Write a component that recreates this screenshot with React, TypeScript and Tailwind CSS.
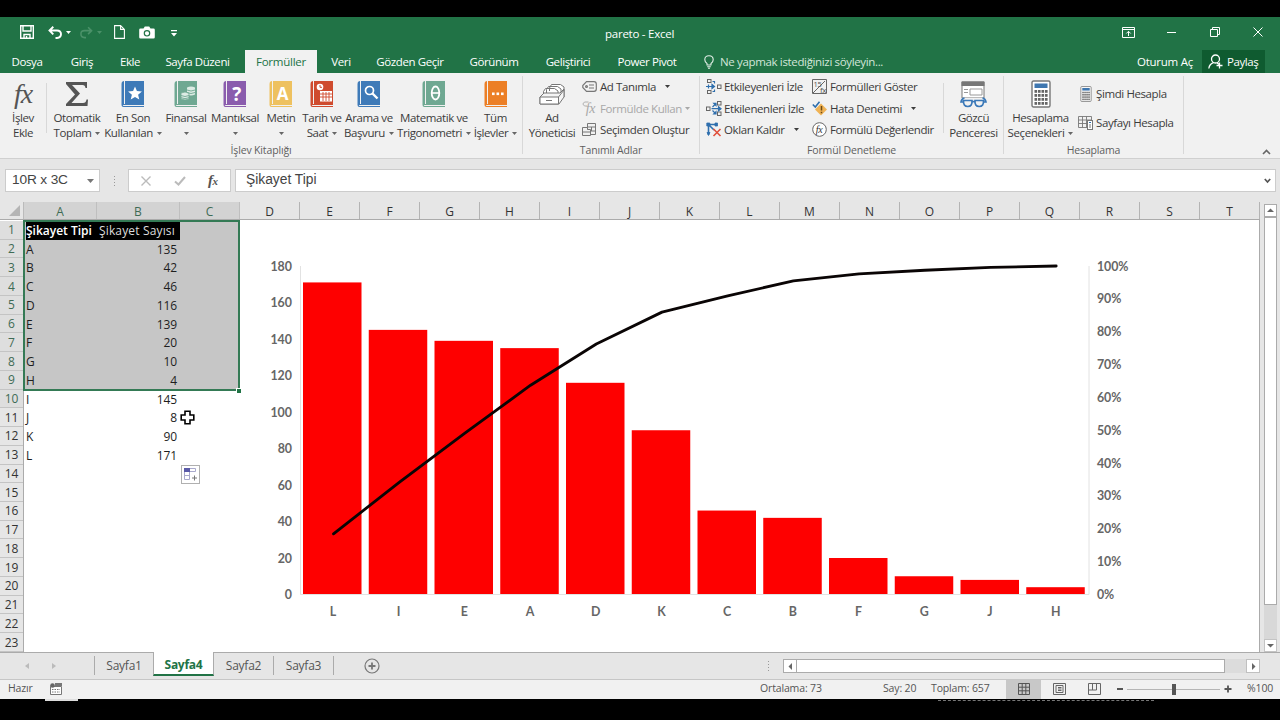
import React from "react";

type Kids = { children?: React.ReactNode };

const Caret = ({ className = "" }: { className?: string }) => (
  <svg width="5" height="3" viewBox="0 0 5 3" className={`shrink-0 ${className}`}>
    <path d="M0 0h5L2.5 3z" fill="currentColor" />
  </svg>
);

const Sep = ({ className = "" }: { className?: string }) => (
  <div className={`w-px shrink-0 self-start bg-[#d8d8d8] ${className}`} />
);

const Book = ({ color, children }: { color: string } & Kids) => (
  <svg width="24" height="28" viewBox="0 0 24 28">
    <path d="M1.5 1.5Q.5 2 .5 4v21Q.5 27 2.5 27H23v-1H3Q1.8 26 1.8 25H23V1H4v23H3V1z" fill={color} />
    {children}
  </svg>
);

const BigButton = ({ width, icon, lines, caret }: { width: string; icon: React.ReactNode; lines: string[]; caret?: boolean }) => (
  <div className={`flex shrink-0 flex-col items-center pt-[6px] ${width}`}>
    <div className="flex h-[30px] items-center justify-center">{icon}</div>
    <div className="flex h-[15px] items-center whitespace-nowrap pt-[3px]">{lines[0]}</div>
    <div className="flex h-[15px] items-center gap-[4px] whitespace-nowrap pt-[3px]">
      {lines[1] && <span>{lines[1]}</span>}
      {caret && <Caret className="text-[#666]" />}
    </div>
  </div>
);

const Small = ({ icon, label, caret, muted }: { icon: React.ReactNode; label: string; caret?: string; muted?: boolean }) => (
  <div className={`flex h-[21.5px] items-center whitespace-nowrap ${muted ? "text-[#a8a8a8]" : ""}`}>
    <span className="flex w-[18px] shrink-0 items-center">{icon}</span>
    <span>{label}</span>
    {caret && <Caret className={caret} />}
  </div>
);

const Group = ({ width, label, children }: { width: string; label: string } & Kids) => (
  <div className={`flex h-[86px] shrink-0 flex-col ${width}`}>
    <div className="flex h-[71px]">{children}</div>
    <div className="flex h-[13px] items-center justify-center whitespace-nowrap text-[10.5px] tracking-[-0.15px] text-[#5f5f5f]">{label}</div>
  </div>
);

const CalcIcon = ({ w, h }: { w: number; h: number }) => (
  <svg width={w} height={h} viewBox="0 0 20 28">
    <rect x="1" y="1" width="18" height="26" rx="1.5" fill="#fff" stroke="#777" strokeWidth="1.4" />
    <rect x="3.5" y="3.5" width="13" height="4.5" fill="#3f77b0" />
    {[10, 14, 18, 22].map((y) => [3.5, 7, 10.5, 14].map((x) => <rect key={`${x}-${y}`} x={x} y={y} width="2.6" height="2.8" fill="#666" />))}
  </svg>
);

const Trace = ({ kind }: { kind: "in" | "out" | "clear" }) => (
  <svg width="16" height="15" viewBox="0 0 16 15" fill="none">
    {kind === "in" && (
      <g>
        <g stroke="#666"><rect x="1.5" y=".5" width="3.500" height="3" /><rect x="1.5" y="11.5" width="3.500" height="3" /><rect x="11.5" y="6" width="3.500" height="3.500" /></g>
        <g stroke="#2f6fad" strokeWidth="1.2"><path d="M0 7.500h6M6.500 2.500h2v2M6.500 12.500h2v-2" /><path d="M6 5.500l2.500 2L6 9.500z" fill="#2f6fad" /><path d="M2.500 5.500v4" /></g>
      </g>
    )}
    {kind === "out" && (
      <g>
        <g stroke="#666"><rect x=".5" y="6" width="3.500" height="3.500" /><rect x="11.500" y=".5" width="3.500" height="3.500" /><rect x="11.500" y="11" width="3.500" height="3.500" /></g>
        <g stroke="#2f6fad" strokeWidth="1.2"><path d="M5.500 7.700H14M6.500 6l2.500-2.500M6.500 9.500L9 12" /><path d="M12.500 5.700l2.500 2-2.500 2zM7.800 2.300H10v2.200zM7.800 13H10v-2.200z" fill="#2f6fad" /></g>
      </g>
    )}
    {kind === "clear" && (
      <g>
        <g stroke="#2f6fad" strokeWidth="1.6"><path d="M2.5 2v11M2 2.500h8M3 3l5 5" /><path d="M.8 1h3v3h-3zM9 1h2.500v3H9zM1 10.500h3L2.500 13.500z" fill="#2f6fad" strokeWidth=".8" /></g>
        <path d="M7.500 7l7 7M14.500 7l-7 7" stroke="#e0503c" strokeWidth="1.6" />
      </g>
    )}
  </svg>
);

const serif = "italic font-['Liberation_Serif',serif]";

const TitleBar = () => (
  <div className="relative flex h-[32px] items-center pb-[2px] text-white">
    <svg width="14" height="14" viewBox="0 0 14 14" className="ml-[20px]" fill="none" stroke="#fff" strokeWidth="1.4">
      <path d="M.7.7h12.6v12.6H.7zM3 1v5h8V1M4 13V9.5h6V13M6.5 11v2" />
    </svg>
    <svg width="14" height="13" viewBox="0 0 14 13" className="ml-[14px]" fill="none" stroke="#fff" strokeWidth="1.9">
      <path d="M1.5 4.5H9q4 0 4 3.6T9 12H7.5M5.3.8L1.5 4.5l3.8 3.800" />
    </svg>
    <Caret className="ml-[4px]" />
    <svg width="13" height="13" viewBox="0 0 14 13" className="ml-[9px]" fill="none" stroke="#4b9169" strokeWidth="1.7">
      <path d="M12.500 4.500H5q-4 0-4 3.600T5 12h1.500M8.700.8l3.800 3.700-3.800 3.800" />
    </svg>
    <Caret className="ml-[4px] text-[#4b9169]" />
    <svg width="11" height="14" viewBox="0 0 11 14" className="ml-[12px]" fill="none" stroke="#fff" strokeWidth="1.1">
      <path d="M.6.600h6l3.800 3.800v9H.6zM6.600.600v3.800h3.800" />
    </svg>
    <svg width="16" height="13" viewBox="0 0 16 13" className="ml-[14px]">
      <path d="M1.500 2.500H4.500L5.800.500h4.400l1.300 2h3q1.300 0 1.300 1.300v7.400q0 1.300-1.300 1.300h-13Q.2 12.500.2 11.200V3.800Q.2 2.500 1.500 2.500z" fill="#fff" />
      <circle cx="8" cy="7.300" r="2.700" fill="none" stroke="#217346" strokeWidth="1.200" />
    </svg>
    <svg width="6" height="7" viewBox="0 0 6 7" className="ml-[16px] mt-[3px]">
      <path d="M0 0h6v1.300H0zM0 3h6L3 6.500z" fill="#fff" />
    </svg>
    <div className="absolute left-[605px] top-[8px] text-[11.5px] leading-[18px] tracking-[-0.25px]">pareto - Excel</div>
    <div className="ml-auto flex items-center pr-[17px]">
      <svg width="13" height="11" viewBox="0 0 13 11" fill="none" stroke="#fff">
        <path d="M.5.500h12v10H.5zM.5 2.500h12M6.500 9V4.500M4.300 6.500l2.200-2.200 2.200 2.200" />
      </svg>
      <div className="ml-[32px] h-px w-[9px] bg-white" />
      <svg width="10" height="10" viewBox="0 0 10 10" className="ml-[34px]" fill="none" stroke="#fff"><path d="M.5 2.500h7v7h-7zM2.500 2.500v-2h7v7h-2" /></svg>
      <svg width="10" height="10" viewBox="0 0 10 10" className="ml-[33px]" fill="none" stroke="#fff"><path d="M.5.500l9 9M9.500.500l-9 9" /></svg>
    </div>
  </div>
);

const tabs: [string, string][] = [
  ["Dosya", "w-[54px]"], ["Giriş", "w-[56px]"], ["Ekle", "w-[40px]"], ["Sayfa Düzeni", "w-[95px]"], ["Formüller", "w-[72px]"],
  ["Veri", "w-[48px]"], ["Gözden Geçir", "w-[90px]"], ["Görünüm", "w-[78px]"], ["Geliştirici", "w-[70px]"], ["Power Pivot", "w-[88px]"],
];

const TabBar = () => (
  <div className="flex h-[24px] items-end text-[11.5px] tracking-[-0.4px] text-white">
    {tabs.map(([t, w]) => (
      <div key={t} className={`flex h-[23px] shrink-0 items-center justify-center whitespace-nowrap ${w} ${t === "Formüller" ? "bg-[#f1f1f1] tracking-[-0.25px] text-[#217346]" : ""}`}>{t}</div>
    ))}
    <div className="ml-[13px] flex h-[23px] items-center gap-[6px] text-[#d3e6da]">
      <svg width="10" height="14" viewBox="0 0 10 14" fill="none" stroke="#e5f0e9" strokeWidth="1.1"><path d="M3 10V8.500Q.8 7 .8 4.700.800.700 5 .700t4.200 4Q9.200 7 7 8.500V10zM3.200 11.700h3.600M4 13.200h2" /></svg>
      <span className="whitespace-nowrap tracking-[-0.35px]">Ne yapmak istediğinizi söyleyin...</span>
    </div>
    <div className="ml-auto flex h-[23px] items-center whitespace-nowrap pr-[9px] tracking-[-0.25px]">Oturum Aç</div>
    <div className="mr-[15px] flex h-[23px] w-[63px] items-center gap-[4px] bg-[#0f5b30] pl-[6px]">
      <svg width="15" height="15" viewBox="0 0 15 15" fill="none" stroke="#fff" strokeWidth="1.300"><circle cx="7.500" cy="5" r="4" /><path d="M.8 14.500Q1.500 9.800 5.500 8.600M9 9l2 1.300M8.500 11.500h6M11.500 8.500v6" /></svg>
      <span>Paylaş</span>
    </div>
  </div>
);

const Ribbon = () => (
  <div className="flex h-[86px] border-b border-[#d0d0d0] bg-[#f1f1f1] text-[11.5px] leading-none tracking-[-0.4px] text-[#3c3c3c]">
    <Group width="w-[522px]" label="İşlev Kitaplığı">
      <BigButton width="w-[46px]" lines={["İşlev", "Ekle"]} icon={<span className={`${serif} text-[28px] leading-none tracking-[-1px] text-[#555]`}>fx</span>} />
      <Sep className="mt-[10px] h-[50px]" />
      <BigButton width="w-[60px]" caret lines={["Otomatik", "Toplam"]} icon={<svg width="24" height="26" viewBox="0 0 24 26"><path d="M1 1h21v6h-1.500q-.3-3-3-3H7l8 8.500L6.500 22H18q3 0 3.500-3.500H23L22.500 25H1v-2l9-9.500L1 3z" fill="#555" /></svg>} />
      <BigButton width="w-[52px]" caret lines={["En Son", "Kullanılan"]} icon={<Book color="#3e7ab8"><path d="M14 6.500l1.900 4.600 5 .4-3.800 3.200 1.200 4.800-4.300-2.600-4.300 2.600 1.200-4.800L7.100 11.500l5-.4z" fill="#fff" /></Book>} />
      <BigButton width="w-[54px]" caret lines={["Finansal"]} icon={<Book color="#6fa892"><g fill="#dcebe4"><path d="M13 7.500q4-2 8 0v7q-4 2-8 0z" /><path d="M7 13q4-2 8 0v6q-4 2-8 0z" stroke="#6fa892" strokeWidth=".8" /></g><path d="M13 10q4 2 8 0M13 12.500q4 2 8 0M7 15.500q4 2 8 0M7 17.700q4 2 8 0" stroke="#6fa892" fill="none" strokeWidth=".9" /></Book>} />
      <BigButton width="w-[44px]" caret lines={["Mantıksal"]} icon={<Book color="#8a5cad"><text x="13.500" y="20.500" textAnchor="middle" fontSize="19" fontWeight="700" fill="#fff">?</text></Book>} />
      <BigButton width="w-[48px]" caret lines={["Metin"]} icon={<Book color="#eec15f"><text x="13.500" y="19.500" textAnchor="middle" fontSize="17" fontWeight="700" fill="#fff">A</text></Book>} />
      <BigButton width="w-[34px]" caret lines={["Tarih ve", "Saat"]} icon={<Book color="#cf4b2e"><rect x="10" y="11" width="12" height="10.500" fill="#fff" /><path d="M10 14h12M10 17h12M13 12v9M16 12v9M19 12v9" stroke="#cf4b2e" strokeWidth=".9" /><circle cx="10" cy="7" r="3.300" fill="#fff" /><path d="M10 5v2.300h2" stroke="#cf4b2e" fill="none" /></Book>} />
      <BigButton width="w-[60px]" caret lines={["Arama ve", "Başvuru"]} icon={<Book color="#3e7ab8"><circle cx="12.500" cy="10.500" r="4" fill="none" stroke="#fff" strokeWidth="1.700" /><path d="M15.500 13.500l5 5" stroke="#fff" strokeWidth="2.400" /></Book>} />
      <BigButton width="w-[70px]" caret lines={["Matematik ve", "Trigonometri"]} icon={<Book color="#6fa892"><ellipse cx="13.500" cy="13" rx="3.800" ry="6.500" fill="none" stroke="#fff" strokeWidth="1.800" /><path d="M10 13h7" stroke="#fff" strokeWidth="1.600" /></Book>} />
      <BigButton width="w-[53px]" caret lines={["Tüm", "İşlevler"]} icon={<Book color="#ec7f26"><g fill="#fff"><rect x="8" y="12.500" width="2.600" height="2.600" /><rect x="12.500" y="12.500" width="2.600" height="2.600" /><rect x="17" y="12.500" width="2.600" height="2.600" /></g></Book>} />
    </Group>
    <Sep className="mt-[3px] h-[78px]" />
    <Group width="w-[176px]" label="Tanımlı Adlar">
      <BigButton width="w-[58px]" lines={["Ad", "Yöneticisi"]} icon={<svg width="26" height="22" viewBox="0 0 26 22" fill="#fff" stroke="#777"><path d="M10.500 8V5l2-3.500h9L25 4v10M7.500 10V6.500L9.500 3.500h9L22 6v5M4.500 12V8.500l2-3h9L19 8v5" /><path d="M1 14l4-4h16l4-4v8l-5 7H1z" fill="#f5f5f5" /><path d="M1 14h18.500v7H1z" /><path d="M19.500 14L25 7M7 17.500h6" fill="none" /></svg>} />
      <div className="flex flex-col pl-[1px] pt-[3px]">
        <Small label="Ad Tanımla" caret="ml-[9px]" icon={<svg width="15" height="11" viewBox="0 0 15 11" fill="none" stroke="#777" strokeWidth="1.200"><path d="M4.500.700H12q2.300 0 2.300 2.300v5q0 2.300-2.300 2.300H4.500L.8 6.500v-2z" /><circle cx="4.500" cy="5.500" r=".9" /><path d="M7 4h5M7 7h5" /></svg>} />
        <Small muted label="Formülde Kullan" caret="ml-[3px]" icon={<svg width="15" height="15" viewBox="0 0 15 15"><path d="M6.500 1H2.500L.8 3l1.700 2H5" fill="none" stroke="#b0b0b0" /><text x="8.500" y="12" textAnchor="middle" fontSize="14" fontStyle="italic" fontFamily="Liberation Serif" fill="#a8a8a8">fx</text></svg>} />
        <Small label="Seçimden Oluştur" icon={<svg width="14" height="14" viewBox="0 0 14 14" fill="none" stroke="#777"><path d="M5.500.500h8v11h-8zM5.500 4h8M9.500 4v4M5.500 8h8" /><path d="M.5 4.500h5v2h3v6h-8z" fill="#f1f1f1" /><path d="M.5 9h8" /></svg>} />
      </div>
    </Group>
    <Sep className="mt-[3px] h-[78px]" />
    <Group width="w-[303px]" label="Formül Denetleme">
      <div className="flex w-[106px] shrink-0 flex-col pl-[6px] pt-[3px]">
        <Small label="Etkileyenleri İzle" icon={<Trace kind="in" />} />
        <Small label="Etkilenenleri İzle" icon={<Trace kind="out" />} />
        <Small label="Okları Kaldır" caret="ml-[9px]" icon={<Trace kind="clear" />} />
      </div>
      <div className="flex w-[137px] shrink-0 flex-col pl-[6px] pt-[3px]">
        <Small label="Formülleri Göster" icon={<svg width="15" height="15" viewBox="0 0 15 15" fill="none" stroke="#666"><path d="M.5.500h14v14H.5zM1 14L13 2" /><text x="1.500" y="8" fontSize="7.500" fill="#555" stroke="none">15</text><text x="8" y="13.500" fontSize="8" fill="#555" stroke="none">fx</text></svg>} />
        <Small label="Hata Denetimi" caret="ml-[9px]" icon={<svg width="16" height="15" viewBox="0 0 16 15"><path d="M9 2.500l6 6-6 6-6-6z" fill="#f0b355" /><path d="M9.500 5v4.500M9.500 10.800v1.500" stroke="#6b4a14" strokeWidth="1.500" /><path d="M.8 3.500l2.500 2.500L7.500.800" fill="none" stroke="#2f6fad" strokeWidth="1.600" /></svg>} />
        <Small label="Formülü Değerlendir" icon={<svg width="15" height="15" viewBox="0 0 15 15"><circle cx="7.500" cy="7.500" r="6.800" fill="#fff" stroke="#666" /><text x="7" y="11" textAnchor="middle" fontSize="10" fontStyle="italic" fontFamily="Liberation Serif" fill="#333">fx</text></svg>} />
      </div>
      <Sep className="mt-[10px] h-[50px]" />
      <BigButton width="w-[59px]" lines={["Gözcü", "Penceresi"]} icon={<svg width="27" height="28" viewBox="0 0 27 28" fill="none"><path d="M2 2h22v16H2z" fill="#fff" stroke="#777" /><path d="M1.500 1.500h23V6h-23z" fill="#777" /><path d="M10 9h12v6H10zM4 9.500h4M4 12.500h4" stroke="#999" /><path d="M3 18h21v6H3z" fill="#f1f1f1" /><g stroke="#3a78b8" strokeWidth="1.700"><path d="M3.500 20.500h8.500q.5 6-4.200 6t-4.300-6zM15 20.500h8.500q.4 6-4.300 6T15 20.500zM12 22q1.500-1 3 0M3.500 22H1q.500-3.500 3.500-4M23.500 22H26q-.500-3.500-3.500-4" /></g></svg>} />
    </Group>
    <Sep className="mt-[3px] h-[78px]" />
    <Group width="w-[179px]" label="Hesaplama">
      <BigButton width="w-[73px]" caret lines={["Hesaplama", "Seçenekleri"]} icon={<CalcIcon w={20} h={28} />} />
      <div className="flex flex-col pl-[1px] pt-[6px]">
        <div className="flex h-[29px] items-center gap-[4px] whitespace-nowrap pl-[2px]"><CalcIcon w={12} h={16} />Şimdi Hesapla</div>
        <div className="flex h-[29px] items-center gap-[3px] whitespace-nowrap">
          <svg width="15" height="14" viewBox="0 0 15 14" fill="none" stroke="#777"><path d="M.5.500h13v11H.5zM.5 4h13M.5 7.500h13M4.500.500v11M8.500.500v11" strokeWidth=".9" /><rect x="9.500" y="4.500" width="5" height="9" fill="#fff" /><path d="M11 6.500h2" stroke="#2f6fad" /><path d="M11 9h2M11 11h2" /></svg>
          Sayfayı Hesapla
        </div>
      </div>
    </Group>
    <Sep className="mt-[3px] h-[78px]" />
    <svg width="9" height="6" viewBox="0 0 9 6" className="ml-auto mr-[9px] mt-[76px]" fill="none" stroke="#666" strokeWidth="1.600"><path d="M1 5l3.500-3.500L8 5" /></svg>
  </div>
);

const Dots = ({ className = "" }: { className?: string }) => (
  <div className={`flex shrink-0 flex-col gap-[2px] ${className}`}>
    {[0, 1, 2, 3].map((i) => <span key={i} className="size-[1px] bg-[#999]" />)}
  </div>
);

const FormulaBar = () => (
  <div className="flex h-[43px] items-center bg-[#e6e6e6] pl-[5px] text-[#444] font-['Liberation_Sans',sans-serif]">
    <div className="flex h-[23px] w-[95px] items-center justify-between border border-[#ccc] bg-white pl-[6px] pr-[5px] text-[13.7px] tracking-[-0.15px]">
      10R x 3C
      <svg width="7" height="4" viewBox="0 0 7 4"><path d="M0 0h7L3.500 4z" fill="#777" /></svg>
    </div>
    <Dots className="ml-[14px]" />
    <div className="ml-[13px] flex h-[23px] w-[103px] items-center border border-[#ccc] bg-white">
      <svg width="10" height="10" viewBox="0 0 10 10" className="ml-[12px]" stroke="#bbb" strokeWidth="1.400"><path d="M.5.500l9 9M9.500.500l-9 9" /></svg>
      <svg width="12" height="10" viewBox="0 0 12 10" className="ml-[23px]" fill="none" stroke="#bbb" strokeWidth="2"><path d="M1 5.500l3.500 3L11 1" /></svg>
      <span className={`${serif} ml-[22px] text-[15px] font-bold leading-none tracking-[-0.5px] text-[#555]`}>f<span className="text-[11px]">x</span></span>
    </div>
    <div className="ml-[4px] flex h-[23px] flex-1 items-center justify-between border border-[#ccc] bg-white pl-[10px] pr-[4px] text-[13.8px]">
      Şikayet Tipi
      <svg width="7" height="6" viewBox="0 0 7 6" fill="none" stroke="#555" strokeWidth="1.700"><path d="M.8 1l2.700 3L6.200 1" /></svg>
    </div>
    <div className="w-[4px]" />
  </div>
);

const letters = "DEFGHIJKLMNOPQRST".split("");

const ColumnHeads = () => (
  <div className="flex h-[18px] w-[1260px] border-b border-[#ababab] bg-[#e6e6e6] text-[12px] leading-none text-[#333]">
    <div className="flex w-[24px] items-end justify-end border-r border-[#bbb] pb-[3px] pr-[3px]"><svg width="11" height="11"><path d="M11 0v11H0z" fill="#b5b5b5" /></svg></div>
    {[["A", "w-[73px]"], ["B", "w-[83px]"], ["C", "w-[60px]"]].map(([c, w]) => (
      <div key={c} className={`flex items-center justify-center border-r border-[#bfbfbf] bg-[#d3d3d3] pt-[2px] text-[#3f6b55] ${w}`}>{c}</div>
    ))}
    {letters.map((c) => (
      <div key={c} className="flex w-[60px] items-center justify-center border-r border-[#b4b4b4] pt-[2px]">{c}</div>
    ))}
  </div>
);

const data: [string, number][] = [["A", 135], ["B", 42], ["C", 46], ["D", 116], ["E", 139], ["F", 20], ["G", 10], ["H", 4], ["I", 145], ["J", 8], ["K", 90], ["L", 171]];

const Rows = () => (
  <div className="relative flex w-[240px] shrink-0 text-[12px] leading-none text-[#1e1e1e]">
    <div className="flex w-[24px] flex-col border-r border-[#ababab]">
      {Array.from({ length: 23 }, (_, i) => (
        <div key={i} className={`flex h-[18.75px] items-center justify-center border-b border-[#c4c4c4] pt-[1px] ${i < 10 ? "bg-[#dedede] text-[#3f6b55]" : "bg-[#e6e6e6] text-[#333]"}`}>{i + 1}</div>
      ))}
    </div>
    <div className="flex w-[216px] flex-col">
      <div className="flex h-[18.75px] bg-[#c6c6c6] pl-[2px] pt-[1px]">
        <div className="flex w-[71px] items-center whitespace-nowrap bg-black font-semibold text-white">Şikayet Tipi</div>
        <div className="flex w-[83px] items-center whitespace-nowrap bg-black pl-[2px] tracking-[0.15px] text-[#ddd]">Şikayet Sayısı</div>
      </div>
      {data.map(([k, v], i) => (
        <div key={k} className={`flex h-[18.75px] items-center pt-[1px] ${i < 8 ? "bg-[#c6c6c6]" : ""}`}>
          <div className="w-[73px] pl-[2px]">{k}</div>
          <div className="w-[80px] text-right tracking-[-0.1px]">{v}</div>
        </div>
      ))}
    </div>
    <div className="absolute left-[23px] top-[-1px] h-[171px] w-[217px] border-2 border-[#347a55]" />
    <div className="absolute left-[236px] top-[167px] size-[5px] border-l border-t border-white bg-[#217346]" />
    <svg width="15" height="15" viewBox="0 0 15 15" className="absolute left-[180px] top-[189px]"><path d="M5 1.200h5V5h3.800v5H10v3.800H5V10H1.200V5H5z" fill="#fff" stroke="#000" strokeWidth="1.600" /></svg>
    <svg width="19" height="19" viewBox="0 0 19 19" className="absolute left-[181px] top-[244px]" fill="none"><rect x=".5" y=".5" width="18" height="18" fill="#fff" stroke="#b0b0b0" /><rect x="3" y="3" width="6" height="4" fill="#5a5aa8" /><g stroke="#a9a9cc"><path d="M9 3.500h5.500v3H9M3.500 7v7.500h5V7M3.500 10.500h5" /></g><path d="M11 13h5M13.500 10.500v5" stroke="#777" /></svg>
  </div>
);

const Chart = () => {
  const sorted = [...data].sort((a, b) => b[1] - a[1]);
  const total = sorted.reduce((s, d) => s + d[1], 0);
  let sum = 0;
  const base = 373.5;
  const height = 328.5;
  const points = sorted.map((d, i) => {
    sum += d[1];
    return `${93.5 + i * 65.7},${base - (sum / total) * height}`;
  });
  return (
    <svg width="1019" height="431" viewBox="0 0 1019 431" className="shrink-0 bg-white" fontSize="12.4" fontWeight="700" fill="#666" fontFamily="Lato, sans-serif">
      <path d="M60.500 45v328.500H849V45" fill="none" stroke="#e2e2e2" />
      {sorted.map(([k, v], i) => (
        <g key={k}>
          <rect x={63 + i * 65.75} y={base - (v / 180) * height} width="58.500" height={(v / 180) * height - 0.5} fill="#fe0000" />
          <text x={93 + i * 65.7} y="395" textAnchor="middle">{k}</text>
        </g>
      ))}
      <polyline points={points.join(" ")} fill="none" stroke="#0a0505" strokeWidth="2.800" strokeLinecap="round" strokeLinejoin="round" />
      {Array.from({ length: 10 }, (_, i) => (
        <text key={i} x="52" y={base + 4.5 - (i * height) / 9} textAnchor="end">{i * 20}</text>
      ))}
      {Array.from({ length: 11 }, (_, i) => (
        <text key={i} x="857" y={base + 4.5 - (i * height) / 10} letterSpacing="-.1">{i * 10}%</text>
      ))}
    </svg>
  );
};

const Tri = ({ d }: { d: string }) => <svg width="7" height="7" viewBox="0 0 7 7"><path d={d} fill="#666" /></svg>;

const VScroll = () => (
  <div className="flex w-[20px] flex-col items-center bg-[#e6e6e6]">
    <div className="flex h-[13px] w-[13px] items-center justify-center border border-[#ababab] bg-white"><Tri d="M0 5h7L3.500 1.500z" /></div>
    <div className="h-[388px] w-[13px] border border-[#ababab] bg-white" />
    <div className="w-[13px] flex-1 bg-[#d8d8d8]" />
    <div className="flex h-[13px] w-[13px] items-center justify-center border border-[#c4c4c4] bg-white"><Tri d="M0 2h7L3.500 5.500z" /></div>
  </div>
);

const SheetTabs = () => (
  <div className="flex h-[27px] items-start border-t border-[#ababab] bg-[#e6e6e6] text-[12px] leading-none tracking-[-0.25px] text-[#555]">
    <div className="flex h-[25px] w-[94px] items-center gap-[23px] pl-[25px]">
      <svg width="4" height="6"><path d="M4 0v6L0 3z" fill="#bbb" /></svg>
      <svg width="4" height="6"><path d="M0 0v6l4-3z" fill="#bbb" /></svg>
    </div>
    <div className="mt-[3px] flex h-[19px] w-[59px] items-center justify-center border-l border-[#ababab]">Sayfa1</div>
    <div className="mt-[-1px] flex h-[24px] w-[61px] items-center justify-center border-x border-b-2 border-x-[#ababab] border-b-[#217346] bg-white pt-[3px] font-bold text-[#217346]">Sayfa4</div>
    <div className="mt-[3px] flex h-[19px] w-[60px] items-center justify-center border-r border-[#ababab]">Sayfa2</div>
    <div className="mt-[3px] flex h-[19px] w-[60px] items-center justify-center border-r border-[#ababab]">Sayfa3</div>
    <svg width="16" height="16" viewBox="0 0 16 16" className="ml-[30px] mt-[5px]" fill="none" stroke="#777"><circle cx="8" cy="8" r="7" strokeWidth="1.200" /><path d="M4.500 8h7M8 4.500v7" strokeWidth="1.800" /></svg>
    <Dots className="ml-auto mt-[8px]" />
    <div className="ml-[14px] mt-[6px] flex h-[14px]">
      <div className="flex w-[14px] items-center justify-center border border-[#ababab] bg-white"><Tri d="M5 0v7L1.500 3.500z" /></div>
      <div className="w-[428px] border border-l-0 border-[#ababab] bg-white" />
      <div className="w-[21px] bg-[#dcdcdc]" />
      <div className="flex w-[14px] items-center justify-center border border-[#c0c0c0] bg-white"><Tri d="M2 0v7l3.500-3.500z" /></div>
    </div>
    <div className="w-[20px]" />
  </div>
);

const StatusBar = () => (
  <div className="flex h-[20px] items-center whitespace-nowrap border-t border-[#c6c6c6] bg-[#f1f1f1] pl-[8px] text-[10.5px] leading-none tracking-[-0.15px] text-[#555]">
    <span className="w-[42px] pb-[2px]">Hazır</span>
    <svg width="12" height="12" viewBox="0 0 12 12" className="mb-[2px]"><path d="M.5 3.500h11v8H.5z" fill="#fff" stroke="#777" /><path d="M5 0h7v3H5z" fill="#777" /><circle cx="2.500" cy="2.500" r="2.300" fill="#666" /><path d="M2 6.500h8M2 9h8" stroke="#777" strokeDasharray="1.500 1" /></svg>
    <span className="ml-auto w-[123px] pb-[2px]">Ortalama: 73</span>
    <span className="w-[48px] pb-[2px]">Say: 20</span>
    <span className="w-[75px] pb-[2px]">Toplam: 657</span>
    <div className="flex h-[19px] w-[35px] items-center justify-center bg-[#c8c8c8] pb-[1px]">
      <svg width="12" height="12" fill="none" stroke="#555"><path d="M.5.500h11v11H.5zM4.200.500v11M7.800.500v11M.5 4.200h11M.5 7.800h11" /></svg>
    </div>
    <svg width="13" height="12" fill="none" stroke="#666" className="mb-[1px] ml-[12px]"><path d="M.5.500h12v11H.5zM3 2.500h7v7H3zM5 4.500h3.500M5 6h3.500M5 7.500h3.500" /></svg>
    <svg width="13" height="12" fill="none" stroke="#666" className="mb-[1px] ml-[22px]"><path d="M.5.500h12v11H.5zM.5 7h8V.500M4.500.500V7" /></svg>
    <div className="mb-px ml-[16px] h-[2px] w-[6px] bg-[#555]" />
    <div className="mb-px ml-[4px] flex h-[11px] w-[93px] items-center">
      <div className="h-px w-[45px] bg-[#b5b5b5]" /><div className="h-[11px] w-[4px] bg-[#555]" /><div className="h-px flex-1 bg-[#b5b5b5]" />
    </div>
    <svg width="8" height="8" className="mb-px ml-[4px]"><path d="M4 .5v7M.5 4h7" stroke="#555" strokeWidth="1.800" /></svg>
    <span className="ml-[15px] w-[33px] pb-[2px]">%100</span>
  </div>
);

export default function App() {
  return (
    <div className="flex h-[720px] w-[1280px] flex-col overflow-hidden bg-black font-['Open_Sans',sans-serif]">
      <div className="mt-[17px] h-[56px] shrink-0 bg-[#217346]">
        <TitleBar />
        <TabBar />
      </div>
      <div className="shrink-0"><Ribbon /></div>
      <div className="shrink-0"><FormulaBar /></div>
      <div className="flex h-[450px] shrink-0 bg-[#e6e6e6]">
        <div className="flex w-[1260px] flex-col border-r border-[#ababab]">
          <ColumnHeads />
          <div className="flex h-[432px] bg-white pt-[1px]">
            <Rows />
            <Chart />
          </div>
        </div>
        <div className="flex pt-[2px]"><VScroll /></div>
      </div>
      <div className="shrink-0"><SheetTabs /></div>
      <div className="shrink-0"><StatusBar /></div>
      <div className="flex h-[2px] shrink-0 pl-[45px]">
        <div className="h-[2px] w-[33px] bg-[#ddd]" />
        <div className="ml-[860px] mt-px h-px w-[216px] border-t border-dashed border-[#777]" />
      </div>
    </div>
  );
}
